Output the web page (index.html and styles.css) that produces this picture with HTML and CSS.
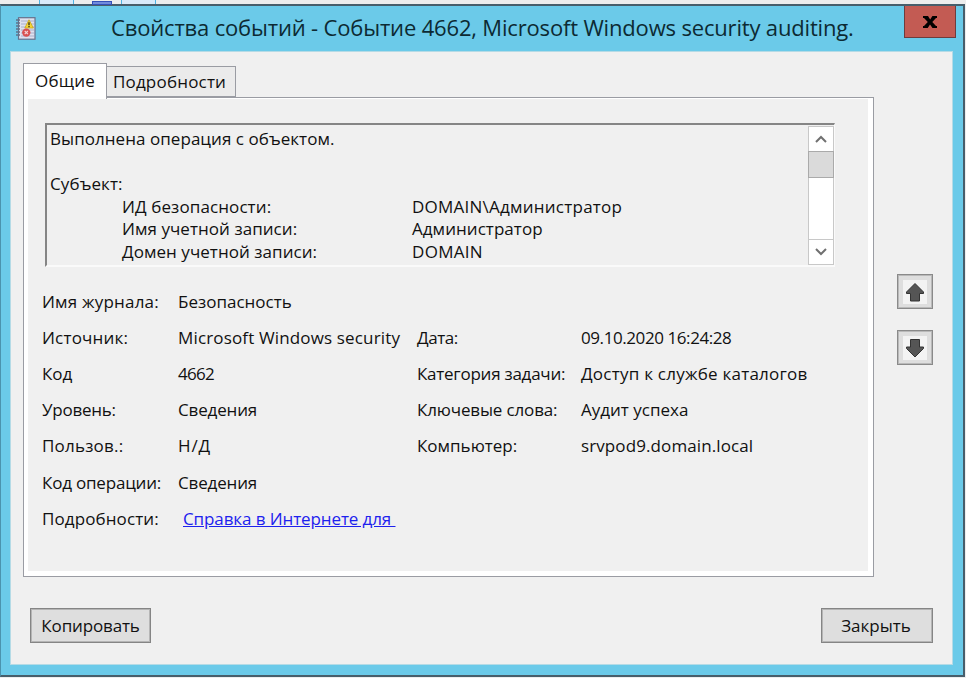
FILE: index.html
```html
<!DOCTYPE html>
<html lang="ru">
<head>
<meta charset="utf-8">
<title>Свойства событий</title>
<link rel="stylesheet" href="styles.css">
</head>
<body>
<div class="strip"><i class="frag frag-a"></i><i class="frag frag-b"></i><i class="frag frag-c"></i></div>
<main class="window">
  <header class="titlebar">
    <svg class="app-icon" viewBox="0 0 20 23" width="20" height="23">
      <rect x="2.5" y=".7" width="16.5" height="21.5" fill="#dfe1ee" stroke="#66718c" stroke-width="1.2"/>
      <path d="M5 4h13M5 7h13M5 10h13M5 13h13M5 16h13M5 19h13" stroke="#a9b0cc" stroke-width="1"/>
      <path d="M0 3h4M0 6h4M0 9h4M0 12h4M0 15h4M0 18h4" stroke="#60718a" stroke-width="1.3"/>
      <path d="M13 2.800l4.400 8.200H8.800z" fill="#f5d632" stroke="#c9a51d" stroke-width=".8"/>
      <path d="M13 5.200v3M13 9v1.200" stroke="#40381a" stroke-width="1.4"/>
      <circle cx="10.3" cy="15.6" r="4.200" fill="#d85050"/>
      <path d="M8.700 14l3.200 3.200M11.900 14l-3.200 3.200" stroke="#f3d5d8" stroke-width="1.1"/>
    </svg>
    <h1 class="title">Свойства событий - Событие 4662, Microsoft Windows security auditing.</h1>
    <button class="close"><svg viewBox="0 0 14 12" width="14" height="12"><path d="M0 0h5l2.200 3.600L9.400 0H14v2h-1L9.300 6l3.700 4h1v2H9.500L7 8.400 4.700 12H0v-2h1l3.800-4L1 2H0z" fill="#000"/></svg></button>
  </header>
  <section class="client">
    <nav class="tabs"><button class="tab active"><span class="t1">Общие</span></button><button class="tab"><span class="t2">Подробности</span></button></nav>
    <div class="content">
      <div class="panel">
        <div class="message">
          <div class="message-text">
            <p><span class="m1">Выполнена операция с объектом.</span></p>
            <p>&nbsp;</p>
            <p><span class="m2">Субъект:</span></p>
            <p class="pair"><span class="m3">ИД безопасности:</span><span class="m4">DOMAIN\Администратор</span></p>
            <p class="pair"><span class="m5">Имя учетной записи:</span><span class="m6">Администратор</span></p>
            <p class="pair"><span class="m7">Домен учетной записи:</span><span class="m8">DOMAIN</span></p>
          </div>
          <div class="scrollbar">
            <div class="sb-btn"><svg viewBox="0 0 12 8" width="12" height="8"><path d="M1 7l5-5 5 5" fill="none" stroke="#707070" stroke-width="2"/></svg></div>
            <div class="thumb"></div>
            <div class="sb-btn sb-down"><svg viewBox="0 0 12 8" width="12" height="8"><path d="M1 1l5 5 5-5" fill="none" stroke="#707070" stroke-width="2"/></svg></div>
          </div>
        </div>
        <div class="fields">
          <span class="f1">Имя журнала:</span><span class="v1">Безопасность</span><span></span><span></span>
          <span class="f2">Источник:</span><span class="v2">Microsoft Windows security</span><span class="g2">Дата:</span><span class="h2">09.10.2020 16:24:28</span>
          <span class="f3">Код</span><span class="v3">4662</span><span class="g3">Категория задачи:</span><span class="h3">Доступ к службе каталогов</span>
          <span class="f4">Уровень:</span><span class="v4">Сведения</span><span class="g4">Ключевые слова:</span><span class="h4">Аудит успеха</span>
          <span class="f5">Пользов.:</span><span class="v5">Н/Д</span><span class="g5">Компьютер:</span><span class="h5">srvpod9.domain.local</span>
          <span class="f6">Код операции:</span><span class="v4">Сведения</span><span></span><span></span>
          <span class="f7">Подробности:</span><a class="link">Справка в Интернете для&nbsp;</a><span></span><span></span>
        </div>
      </div>
      <aside class="nav">
        <button class="nav-btn"><svg viewBox="0 0 24 24" width="24" height="24"><path d="M12 3.500l8.500 8.500v1.500H16.500v7.500h-9v-7.500H3.500V12z" fill="#555" stroke="#333" stroke-width="1"/></svg></button>
        <button class="nav-btn"><svg viewBox="0 0 24 24" width="24" height="24"><path d="M12 21l8.500-8.500V11H16.500V3.500h-9V11H3.500v1.500z" fill="#555" stroke="#333" stroke-width="1"/></svg></button>
      </aside>
    </div>
    <footer class="footer"><button class="btn copy"><span class="b1">Копировать</span></button><button class="btn shut"><span class="b2">Закрыть</span></button></footer>
  </section>
</main>
</body>
</html>
```
FILE: styles.css
```css
* { box-sizing: border-box; }
html, body { margin: 0; }
body {
  width: 966px; height: 678px; overflow: hidden;
  background: #ededed;
  font-family: "Open Sans", "Noto Sans", sans-serif;
  font-size: 17px; color: #111;
}
button { font: inherit; color: inherit; padding: 0; margin: 0; border-radius: 0; }
h1, p { margin: 0; font-weight: 400; }
svg { display: block; }
.strip { height: 4px; display: flex; }
.frag { border: 1px solid #4eb3e4; border-width: 0 1px; background: #d9eafa; height: 4px; }
.frag-a { width: 35px; margin-left: 39px; }
.frag-b { width: 20px; margin: 1px 9px 0 18px; background: #718bdc; border: 1px solid #3550b8; }
.frag-c { width: 35px; }
.window {
  width: 965px; height: 673px;
  background: #6bcae9; border: 1px solid #485e6b; border-left-color: #4b93ae; border-width: 2px 2px 2px 1px;
}
.titlebar { height: 45px; display: flex; align-items: flex-start; padding-right: 7px; }
.app-icon { margin: 11px 0 0 15px; }
.title { flex: 1; margin-left: 75px; font-size: 22px; letter-spacing: -.17px; line-height: 43px; white-space: nowrap; color: #0d2a33; }
.close {
  width: 52px; height: 32px; background: #c35b53; border: 1px solid #6e3c3d; border-top: 0;
  display: grid; place-items: center;
}
.client {
  margin-left: 9px; width: 943px; height: 614px; background: #f0f0f0;
  border: 1px solid #b5dbe6; padding: 11px 19px 0 12px;
}
.tabs { display: flex; align-items: flex-end; height: 36px; position: relative; z-index: 1; margin-bottom: -2px; }
.tab {
  height: 31px; width: 129px; margin-bottom: 2px; background: #ebebeb;
  border: 1px solid #9a9ca3; border-left: 0; white-space: nowrap;
}
.tab.active { height: 36px; width: 84px; margin: 0; padding-bottom: 3px; background: #fff; border: 1px solid #9a9ca3; border-bottom: 0; }
.tab:not(.active) { padding-right: 3px; }
.content { display: flex; justify-content: space-between; }
.panel {
  width: 851px; height: 480px; border: 1px solid #9a9ca3; background: #f0f0f0;
  box-shadow: inset 0 0 0 1px #fff, inset 4px 0 #fff, inset -5px 0 #fff, inset 0 -5px #fff;
  padding: 25px 0 0 21px;
}
.message {
  width: 790px; height: 144px; display: flex; justify-content: space-between;
  border: 2px solid #858585; border-right: 1px solid #fafafa; border-bottom: 2px solid #fafafa;
}
.message-text { padding: 3px 0 0 3px; line-height: 22.6px; white-space: nowrap; }
.pair { display: grid; grid-template-columns: 290px auto; padding-left: 72px; justify-content: start; }
.scrollbar { width: 26px; height: 139px; margin-top: 1px; background: #fff; border: 1px solid #c8c8c8; display: flex; flex-direction: column; }
.sb-btn { height: 24px; display: grid; place-items: center; }
.thumb { height: 27px; margin: 0 -1px; background: #dadada; border: 1px solid #aaa; }
.sb-down { height: 25px; margin-top: auto; border-top: 1px solid #c8c8c8; }
.fields {
  margin: 16px 0 0 -3px; display: grid; grid-template-columns: 136px 239px 164px 240px;
  grid-auto-rows: 36.2px; align-items: center; white-space: nowrap;
}
.fields > *, .pair > * { justify-self: start; }
.link { color: #1d22ee; text-decoration: underline; margin-left: 5px; letter-spacing: -.1px; }
.nav { padding: 177px 0 0; display: flex; flex-direction: column; gap: 21px; }
.nav-btn { width: 36px; height: 35px; border: 1px solid #8a8a8a; background: #dedede; display: grid; place-items: center; box-shadow: inset 0 0 0 1px #b9b9b9; }
.nav-btn svg { background: #f3f3f3; }
.footer { display: flex; justify-content: space-between; margin: 31px 0 0 7px; }
.btn { height: 35px; border: 1px solid #858585; background: #dedede; box-shadow: inset 0 0 0 1px #b5b5b5; }
.copy { width: 121px; }
.shut { width: 112px; padding-right: 2px; }

/* Tracking of the individual labels */
.m1 { letter-spacing: .05px; }
.m2, .m3, .h5, .f7 { letter-spacing: .1px; }
.m4, .h3 { letter-spacing: .24px; }
.m5, .m6, .m7 { letter-spacing: .05px; }
.m8 { letter-spacing: .3px; }
.f1, .f2, .f5, .t1, .t2 { letter-spacing: .2px; }
.v2 { letter-spacing: .15px; }
.g2, .h2 { letter-spacing: -.42px; }
.v3 { letter-spacing: -.7px; }
.g3, .f4 { letter-spacing: -.25px; }
.v4, .g4 { letter-spacing: -.15px; }
.v5 { letter-spacing: .9px; }
.f6 { letter-spacing: -.2px; }
.b1 { letter-spacing: -.15px; }
```
